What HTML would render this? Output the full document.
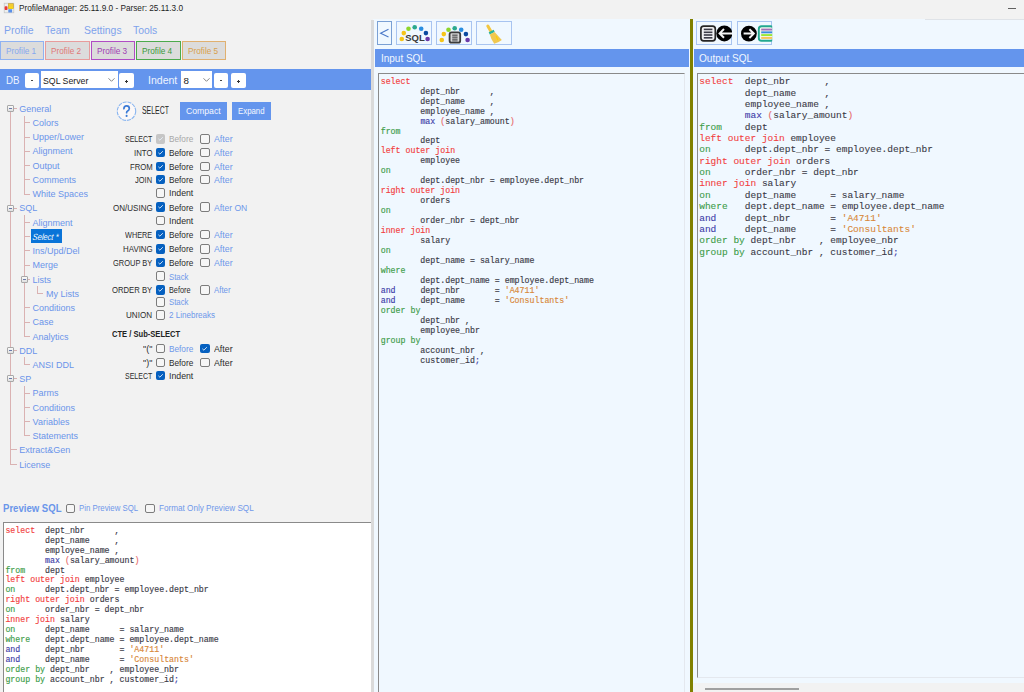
<!DOCTYPE html>
<html><head><meta charset="utf-8"><style>
html,body{margin:0;padding:0}
body{width:1024px;height:692px;overflow:hidden;position:relative;background:#f2f2f2;font-family:"Liberation Sans",sans-serif}
.a{position:absolute;box-sizing:border-box}
.t{position:absolute;white-space:pre;line-height:1;transform-origin:0 0}
</style></head><body>
<div class="a" style="left:373px;top:19px;width:651px;height:673px;background:#f0f8ff"></div>
<div class="a" style="left:693px;top:683px;width:331px;height:9px;background:#f2f2f2"></div>
<div class="a" style="left:705px;top:688px;width:94px;height:2px;background:#a0a0a0"></div>
<div class="a" style="left:371.4px;top:19.5px;width:2.2px;height:673px;background:#dadada"></div>
<div class="a" style="left:690px;top:19px;width:3px;height:673px;background:#808000"></div>
<svg class="a" style="left:3px;top:2px" width="12" height="12" viewBox="0 0 12 12">
<rect x="1.2" y="1.2" width="9.6" height="9.6" fill="#eceeee" stroke="#c4c4c4" stroke-width="0.7"/>
<rect x="5.3" y="1.7" width="5" height="4.9" fill="#f4cc30" stroke="#c09a30" stroke-width="0.6"/>
<rect x="5.6" y="5.2" width="4.5" height="1.3" fill="#ffe000"/>
<rect x="1.6" y="4.3" width="2.9" height="3.8" rx="0.8" fill="#e83838"/>
<rect x="5.3" y="7.3" width="3.8" height="3.3" rx="0.5" fill="#5a90e8"/>
</svg>
<div class="t" style="left:18.75px;top:3.94px;font-size:8.7px;color:#1e1e1e;font-weight:normal;font-style:normal;font-family:'Liberation Sans',sans-serif;;transform:scaleX(0.9477) ">ProfileManager: 25.11.9.0 - Parser: 25.11.3.0</div>
<div class="a" style="left:1008px;top:8px;width:8px;height:1px;background:#606060"></div>
<div class="a" style="left:925px;top:18.5px;width:99px;height:1px;background:#dfe3e8"></div>
<div class="t" style="left:3.90px;top:25.02px;font-size:11.2px;color:#7ea2ec;font-weight:normal;font-style:normal;font-family:'Liberation Sans',sans-serif;;transform:scaleX(0.9364) ">Profile</div>
<div class="t" style="left:45.30px;top:25.02px;font-size:11.2px;color:#7ea2ec;font-weight:normal;font-style:normal;font-family:'Liberation Sans',sans-serif;;transform:scaleX(0.9028) ">Team</div>
<div class="t" style="left:84.00px;top:25.02px;font-size:11.2px;color:#7ea2ec;font-weight:normal;font-style:normal;font-family:'Liberation Sans',sans-serif;;transform:scaleX(0.9298) ">Settings</div>
<div class="t" style="left:132.80px;top:25.02px;font-size:11.2px;color:#7ea2ec;font-weight:normal;font-style:normal;font-family:'Liberation Sans',sans-serif;;transform:scaleX(0.9263) ">Tools</div>
<div class="a" style="left:0px;top:41px;width:44px;height:19px;background:#dcdcdc;border:1px solid #8fb2f2;box-sizing:border-box"></div>
<div class="t" style="left:5.80px;top:46.72px;font-size:8.6px;color:#86a8ee;font-weight:normal;font-style:normal;font-family:'Liberation Sans',sans-serif;;transform:scaleX(0.9578) ">Profile 1</div>
<div class="a" style="left:45px;top:41px;width:44.7px;height:19px;background:#dcdcdc;border:1px solid #e89c9c;box-sizing:border-box"></div>
<div class="t" style="left:50.80px;top:46.72px;font-size:8.6px;color:#e07878;font-weight:normal;font-style:normal;font-family:'Liberation Sans',sans-serif;;transform:scaleX(0.9578) ">Profile 2</div>
<div class="a" style="left:91px;top:41px;width:44px;height:19px;background:#dcdcdc;border:1px solid #b04cc4;box-sizing:border-box"></div>
<div class="t" style="left:97.20px;top:46.72px;font-size:8.6px;color:#a03cb4;font-weight:normal;font-style:normal;font-family:'Liberation Sans',sans-serif;;transform:scaleX(0.9578) ">Profile 3</div>
<div class="a" style="left:136.2px;top:41px;width:44.80000000000001px;height:19px;background:#dcdcdc;border:1px solid #4caa4c;box-sizing:border-box"></div>
<div class="t" style="left:142.00px;top:46.72px;font-size:8.6px;color:#3a9a3a;font-weight:normal;font-style:normal;font-family:'Liberation Sans',sans-serif;;transform:scaleX(0.9578) ">Profile 4</div>
<div class="a" style="left:182px;top:41px;width:44.30000000000001px;height:19px;background:#dcdcdc;border:1px solid #e0b070;box-sizing:border-box"></div>
<div class="t" style="left:187.80px;top:46.72px;font-size:8.6px;color:#d8a04c;font-weight:normal;font-style:normal;font-family:'Liberation Sans',sans-serif;;transform:scaleX(0.9578) ">Profile 5</div>
<div class="a" style="left:0px;top:68.5px;width:371px;height:21.5px;background:#6495ed"></div>
<div class="t" style="left:6.00px;top:75.19px;font-size:11px;color:#eef4ff;font-weight:normal;font-style:normal;font-family:'Liberation Sans',sans-serif;;transform:scaleX(0.8834) ">DB</div>
<div class="a" style="left:24.5px;top:72.5px;width:14.5px;height:15.5px;background:#fff;border-radius:2px"></div>
<div class="a" style="left:30.75px;top:80.2px;width:2px;height:1px;background:#444"></div>
<div class="a" style="left:41px;top:71px;width:76.5px;height:17.2px;background:#fff"></div>
<div class="t" style="left:43.20px;top:75.50px;font-size:9.8px;color:#222;font-weight:normal;font-style:normal;font-family:'Liberation Sans',sans-serif;;transform:scaleX(0.8932) ">SQL Server</div>
<svg class="a" style="left:107px;top:77px" width="9" height="6"><path d="M1.5 1.3 L4.5 4.3 L7.5 1.3" fill="none" stroke="#777" stroke-width="0.9"/></svg>
<div class="a" style="left:119.4px;top:72.5px;width:14.299999999999983px;height:15.5px;background:#fff;border-radius:2px"></div>
<div class="a" style="left:125.05px;top:80.6px;width:3px;height:1px;background:#333"></div>
<div class="a" style="left:126.05px;top:79.6px;width:1px;height:3px;background:#333"></div>
<div class="t" style="left:147.50px;top:75.19px;font-size:11px;color:#eef4ff;font-weight:normal;font-style:normal;font-family:'Liberation Sans',sans-serif;;transform:scaleX(0.9577) ">Indent</div>
<div class="a" style="left:181px;top:71px;width:31px;height:17.2px;background:#fff"></div>
<div class="t" style="left:183.50px;top:75.50px;font-size:9.8px;color:#222;font-weight:normal;font-style:normal;font-family:'Liberation Sans',sans-serif;">8</div>
<svg class="a" style="left:202px;top:77px" width="9" height="6"><path d="M1.5 1.3 L4.5 4.3 L7.5 1.3" fill="none" stroke="#777" stroke-width="0.9"/></svg>
<div class="a" style="left:214.3px;top:72.5px;width:14.099999999999994px;height:15.5px;background:#fff;border-radius:2px"></div>
<div class="a" style="left:220.35000000000002px;top:80.2px;width:2px;height:1px;background:#444"></div>
<div class="a" style="left:231px;top:72.5px;width:14.5px;height:15.5px;background:#fff;border-radius:2px"></div>
<div class="a" style="left:236.75px;top:80.6px;width:3px;height:1px;background:#333"></div>
<div class="a" style="left:237.75px;top:79.6px;width:1px;height:3px;background:#333"></div>
<div class="a" style="left:10.0px;top:108.7px;width:1px;height:356.0px;background:#dab2b2"></div>
<div class="a" style="left:23.8px;top:115.7px;width:1px;height:78.82000000000001px;background:#dab2b2"></div>
<div class="a" style="left:23.8px;top:215.24px;width:1px;height:121.48000000000002px;background:#dab2b2"></div>
<div class="a" style="left:37.2px;top:286.34000000000003px;width:1px;height:7.71999999999997px;background:#dab2b2"></div>
<div class="a" style="left:23.8px;top:357.44px;width:1px;height:7.720000000000027px;background:#dab2b2"></div>
<div class="a" style="left:23.8px;top:385.88px;width:1px;height:50.379999999999995px;background:#dab2b2"></div>
<div class="a" style="left:10.5px;top:108.2px;width:6.199999999999999px;height:1px;background:#dab2b2"></div>
<div class="a" style="left:24.3px;top:122.42px;width:5.800000000000001px;height:1px;background:#dab2b2"></div>
<div class="a" style="left:24.3px;top:136.64000000000001px;width:5.800000000000001px;height:1px;background:#dab2b2"></div>
<div class="a" style="left:24.3px;top:150.86px;width:5.800000000000001px;height:1px;background:#dab2b2"></div>
<div class="a" style="left:24.3px;top:165.08px;width:5.800000000000001px;height:1px;background:#dab2b2"></div>
<div class="a" style="left:24.3px;top:179.3px;width:5.800000000000001px;height:1px;background:#dab2b2"></div>
<div class="a" style="left:24.3px;top:193.52px;width:5.800000000000001px;height:1px;background:#dab2b2"></div>
<div class="a" style="left:10.5px;top:207.74px;width:6.199999999999999px;height:1px;background:#dab2b2"></div>
<div class="a" style="left:24.3px;top:221.96px;width:5.800000000000001px;height:1px;background:#dab2b2"></div>
<div class="a" style="left:24.3px;top:236.18px;width:5.800000000000001px;height:1px;background:#dab2b2"></div>
<div class="a" style="left:24.3px;top:250.40000000000003px;width:5.800000000000001px;height:1px;background:#dab2b2"></div>
<div class="a" style="left:24.3px;top:264.62px;width:5.800000000000001px;height:1px;background:#dab2b2"></div>
<div class="a" style="left:24.3px;top:278.84000000000003px;width:5.800000000000001px;height:1px;background:#dab2b2"></div>
<div class="a" style="left:37.7px;top:293.06px;width:5.799999999999997px;height:1px;background:#dab2b2"></div>
<div class="a" style="left:24.3px;top:307.28000000000003px;width:5.800000000000001px;height:1px;background:#dab2b2"></div>
<div class="a" style="left:24.3px;top:321.5px;width:5.800000000000001px;height:1px;background:#dab2b2"></div>
<div class="a" style="left:24.3px;top:335.72px;width:5.800000000000001px;height:1px;background:#dab2b2"></div>
<div class="a" style="left:10.5px;top:349.94px;width:6.199999999999999px;height:1px;background:#dab2b2"></div>
<div class="a" style="left:24.3px;top:364.16px;width:5.800000000000001px;height:1px;background:#dab2b2"></div>
<div class="a" style="left:10.5px;top:378.38px;width:6.199999999999999px;height:1px;background:#dab2b2"></div>
<div class="a" style="left:24.3px;top:392.6px;width:5.800000000000001px;height:1px;background:#dab2b2"></div>
<div class="a" style="left:24.3px;top:406.82px;width:5.800000000000001px;height:1px;background:#dab2b2"></div>
<div class="a" style="left:24.3px;top:421.04px;width:5.800000000000001px;height:1px;background:#dab2b2"></div>
<div class="a" style="left:24.3px;top:435.26px;width:5.800000000000001px;height:1px;background:#dab2b2"></div>
<div class="a" style="left:10.5px;top:449.48px;width:6.199999999999999px;height:1px;background:#dab2b2"></div>
<div class="a" style="left:10.5px;top:463.7px;width:6.199999999999999px;height:1px;background:#dab2b2"></div>
<div class="a" style="left:7.2px;top:105.2px;width:6.8px;height:6.8px;background:linear-gradient(#fafafa,#e0e0e0);border:1px solid #a8a8a8;border-radius:1px"></div>
<div class="a" style="left:8.9px;top:108.10000000000001px;width:3.4px;height:1px;background:#6a7aaa"></div>
<div class="t" style="left:19.20px;top:104.58px;font-size:9px;color:#6a94ea;font-weight:normal;font-style:normal;font-family:'Liberation Sans',sans-serif;">General</div>
<div class="t" style="left:32.60px;top:118.83px;font-size:9px;color:#6a94ea;font-weight:normal;font-style:normal;font-family:'Liberation Sans',sans-serif;">Colors</div>
<div class="t" style="left:32.60px;top:133.07px;font-size:9px;color:#6a94ea;font-weight:normal;font-style:normal;font-family:'Liberation Sans',sans-serif;">Upper/Lower</div>
<div class="t" style="left:32.60px;top:147.32px;font-size:9px;color:#6a94ea;font-weight:normal;font-style:normal;font-family:'Liberation Sans',sans-serif;">Alignment</div>
<div class="t" style="left:32.60px;top:161.56px;font-size:9px;color:#6a94ea;font-weight:normal;font-style:normal;font-family:'Liberation Sans',sans-serif;">Output</div>
<div class="t" style="left:32.60px;top:175.81px;font-size:9px;color:#6a94ea;font-weight:normal;font-style:normal;font-family:'Liberation Sans',sans-serif;">Comments</div>
<div class="t" style="left:32.60px;top:190.05px;font-size:9px;color:#6a94ea;font-weight:normal;font-style:normal;font-family:'Liberation Sans',sans-serif;">White Spaces</div>
<div class="a" style="left:7.2px;top:204.74px;width:6.8px;height:6.8px;background:linear-gradient(#fafafa,#e0e0e0);border:1px solid #a8a8a8;border-radius:1px"></div>
<div class="a" style="left:8.9px;top:207.64000000000001px;width:3.4px;height:1px;background:#6a7aaa"></div>
<div class="t" style="left:19.20px;top:204.30px;font-size:9px;color:#6a94ea;font-weight:normal;font-style:normal;font-family:'Liberation Sans',sans-serif;">SQL</div>
<div class="t" style="left:32.60px;top:218.54px;font-size:9px;color:#6a94ea;font-weight:normal;font-style:normal;font-family:'Liberation Sans',sans-serif;">Alignment</div>
<div class="a" style="left:31px;top:229.3px;width:31.4px;height:14.2px;background:#0a74d8"></div>
<div class="t" style="left:32.60px;top:232.56px;font-size:9px;color:#ffffff;font-weight:normal;font-style:italic;font-family:'Liberation Sans',sans-serif;;transform:scaleX(0.8360) skewX(-8deg)">Select *</div>
<div class="t" style="left:32.60px;top:247.03px;font-size:9px;color:#6a94ea;font-weight:normal;font-style:normal;font-family:'Liberation Sans',sans-serif;">Ins/Upd/Del</div>
<div class="t" style="left:32.60px;top:261.28px;font-size:9px;color:#6a94ea;font-weight:normal;font-style:normal;font-family:'Liberation Sans',sans-serif;">Merge</div>
<div class="a" style="left:21.0px;top:275.84000000000003px;width:6.8px;height:6.8px;background:linear-gradient(#fafafa,#e0e0e0);border:1px solid #a8a8a8;border-radius:1px"></div>
<div class="a" style="left:22.7px;top:278.74px;width:3.4px;height:1px;background:#6a7aaa"></div>
<div class="t" style="left:32.60px;top:275.52px;font-size:9px;color:#6a94ea;font-weight:normal;font-style:normal;font-family:'Liberation Sans',sans-serif;">Lists</div>
<div class="t" style="left:46.00px;top:289.77px;font-size:9px;color:#6a94ea;font-weight:normal;font-style:normal;font-family:'Liberation Sans',sans-serif;">My Lists</div>
<div class="t" style="left:32.60px;top:304.01px;font-size:9px;color:#6a94ea;font-weight:normal;font-style:normal;font-family:'Liberation Sans',sans-serif;">Conditions</div>
<div class="t" style="left:32.60px;top:318.26px;font-size:9px;color:#6a94ea;font-weight:normal;font-style:normal;font-family:'Liberation Sans',sans-serif;">Case</div>
<div class="t" style="left:32.60px;top:332.50px;font-size:9px;color:#6a94ea;font-weight:normal;font-style:normal;font-family:'Liberation Sans',sans-serif;">Analytics</div>
<div class="a" style="left:7.2px;top:346.94px;width:6.8px;height:6.8px;background:linear-gradient(#fafafa,#e0e0e0);border:1px solid #a8a8a8;border-radius:1px"></div>
<div class="a" style="left:8.9px;top:349.84px;width:3.4px;height:1px;background:#6a7aaa"></div>
<div class="t" style="left:19.20px;top:346.75px;font-size:9px;color:#6a94ea;font-weight:normal;font-style:normal;font-family:'Liberation Sans',sans-serif;">DDL</div>
<div class="t" style="left:32.60px;top:360.99px;font-size:9px;color:#6a94ea;font-weight:normal;font-style:normal;font-family:'Liberation Sans',sans-serif;">ANSI DDL</div>
<div class="a" style="left:7.2px;top:375.38px;width:6.8px;height:6.8px;background:linear-gradient(#fafafa,#e0e0e0);border:1px solid #a8a8a8;border-radius:1px"></div>
<div class="a" style="left:8.9px;top:378.28px;width:3.4px;height:1px;background:#6a7aaa"></div>
<div class="t" style="left:19.20px;top:375.24px;font-size:9px;color:#6a94ea;font-weight:normal;font-style:normal;font-family:'Liberation Sans',sans-serif;">SP</div>
<div class="t" style="left:32.60px;top:389.48px;font-size:9px;color:#6a94ea;font-weight:normal;font-style:normal;font-family:'Liberation Sans',sans-serif;">Parms</div>
<div class="t" style="left:32.60px;top:403.73px;font-size:9px;color:#6a94ea;font-weight:normal;font-style:normal;font-family:'Liberation Sans',sans-serif;">Conditions</div>
<div class="t" style="left:32.60px;top:417.97px;font-size:9px;color:#6a94ea;font-weight:normal;font-style:normal;font-family:'Liberation Sans',sans-serif;">Variables</div>
<div class="t" style="left:32.60px;top:432.22px;font-size:9px;color:#6a94ea;font-weight:normal;font-style:normal;font-family:'Liberation Sans',sans-serif;">Statements</div>
<div class="t" style="left:19.20px;top:446.46px;font-size:9px;color:#6a94ea;font-weight:normal;font-style:normal;font-family:'Liberation Sans',sans-serif;">Extract&amp;Gen</div>
<div class="t" style="left:19.20px;top:460.71px;font-size:9px;color:#6a94ea;font-weight:normal;font-style:normal;font-family:'Liberation Sans',sans-serif;">License</div>
<svg class="a" style="left:116px;top:101px" width="21" height="21" viewBox="0 0 21 21">
<circle cx="10.5" cy="10.2" r="9.2" fill="#fbf8f8" stroke="#8ab6f0" stroke-width="1.1" stroke-dasharray="4 0.9"/>
<path d="M7.9 7.7 Q8.0 4.9 10.6 4.9 Q13.3 4.9 13.3 7.4 Q13.3 9.0 11.7 9.9 Q10.6 10.6 10.6 11.7" fill="none" stroke="#3a7ad6" stroke-width="1.7" stroke-linecap="round"/>
<circle cx="10.6" cy="14.9" r="1.05" fill="#3a7ad6"/>
</svg>
<div class="t" style="left:141.60px;top:105.83px;font-size:10px;color:#262626;font-weight:normal;font-style:normal;font-family:'Liberation Sans',sans-serif;;transform:scaleX(0.6914) ">SELECT</div>
<div class="a" style="left:179.9px;top:102.1px;width:47px;height:17.6px;background:#6495ed"></div>
<div class="t" style="left:185.90px;top:106.74px;font-size:8.7px;color:#f4f8ff;font-weight:normal;font-style:normal;font-family:'Liberation Sans',sans-serif;">Compact</div>
<div class="a" style="left:231.8px;top:102.1px;width:39.2px;height:17.6px;background:#6495ed"></div>
<div class="t" style="left:237.90px;top:106.74px;font-size:8.7px;color:#f4f8ff;font-weight:normal;font-style:normal;font-family:'Liberation Sans',sans-serif;;transform:scaleX(0.9027) ">Expand</div>
<div class="t" style="left:125.10px;top:134.47px;font-size:9.6px;color:#2c2c2c;font-weight:normal;font-style:normal;font-family:'Liberation Sans',sans-serif;;transform:scaleX(0.7287) ">SELECT</div>
<div class="a" style="left:156px;top:134.30px;width:9.4px;height:9.4px;background:#c6c6c6;border-radius:2px"><svg width="9" height="9" viewBox="0 0 9 9" style="position:absolute;left:0;top:0"><path d="M2.4 4.8 L3.9 6.2 L6.8 3.2" fill="none" stroke="#e8f0fa" stroke-width="0.9"/></svg></div>
<div class="t" style="left:169.40px;top:134.47px;font-size:9.6px;color:#a8a8a8;font-weight:normal;font-style:normal;font-family:'Liberation Sans',sans-serif;;transform:scaleX(0.8592) ">Before</div>
<div class="a" style="left:200.4px;top:134.3px;width:9.4px;height:9.4px;background:#f6f6f6;border:1px solid #7c7c7c;border-radius:2px"></div>
<div class="t" style="left:214.00px;top:134.47px;font-size:9.6px;color:#6e98ea;font-weight:normal;font-style:normal;font-family:'Liberation Sans',sans-serif;;transform:scaleX(0.9178) ">After</div>
<div class="t" style="left:133.80px;top:147.97px;font-size:9.6px;color:#2c2c2c;font-weight:normal;font-style:normal;font-family:'Liberation Sans',sans-serif;;transform:scaleX(0.8132) ">INTO</div>
<div class="a" style="left:156px;top:147.80px;width:9.4px;height:9.4px;background:#0560c0;border-radius:2px"><svg width="9" height="9" viewBox="0 0 9 9" style="position:absolute;left:0;top:0"><path d="M2.4 4.8 L3.9 6.2 L6.8 3.2" fill="none" stroke="#e8f0fa" stroke-width="0.9"/></svg></div>
<div class="t" style="left:169.40px;top:147.97px;font-size:9.6px;color:#2c2c2c;font-weight:normal;font-style:normal;font-family:'Liberation Sans',sans-serif;;transform:scaleX(0.8592) ">Before</div>
<div class="a" style="left:200.4px;top:147.8px;width:9.4px;height:9.4px;background:#f6f6f6;border:1px solid #7c7c7c;border-radius:2px"></div>
<div class="t" style="left:214.00px;top:147.97px;font-size:9.6px;color:#6e98ea;font-weight:normal;font-style:normal;font-family:'Liberation Sans',sans-serif;;transform:scaleX(0.9178) ">After</div>
<div class="t" style="left:129.50px;top:161.67px;font-size:9.6px;color:#2c2c2c;font-weight:normal;font-style:normal;font-family:'Liberation Sans',sans-serif;;transform:scaleX(0.8071) ">FROM</div>
<div class="a" style="left:156px;top:161.50px;width:9.4px;height:9.4px;background:#0560c0;border-radius:2px"><svg width="9" height="9" viewBox="0 0 9 9" style="position:absolute;left:0;top:0"><path d="M2.4 4.8 L3.9 6.2 L6.8 3.2" fill="none" stroke="#e8f0fa" stroke-width="0.9"/></svg></div>
<div class="t" style="left:169.40px;top:161.67px;font-size:9.6px;color:#2c2c2c;font-weight:normal;font-style:normal;font-family:'Liberation Sans',sans-serif;;transform:scaleX(0.8592) ">Before</div>
<div class="a" style="left:200.4px;top:161.5px;width:9.4px;height:9.4px;background:#f6f6f6;border:1px solid #7c7c7c;border-radius:2px"></div>
<div class="t" style="left:214.00px;top:161.67px;font-size:9.6px;color:#6e98ea;font-weight:normal;font-style:normal;font-family:'Liberation Sans',sans-serif;;transform:scaleX(0.9178) ">After</div>
<div class="t" style="left:135.20px;top:175.17px;font-size:9.6px;color:#2c2c2c;font-weight:normal;font-style:normal;font-family:'Liberation Sans',sans-serif;;transform:scaleX(0.7823) ">JOIN</div>
<div class="a" style="left:156px;top:175.00px;width:9.4px;height:9.4px;background:#0560c0;border-radius:2px"><svg width="9" height="9" viewBox="0 0 9 9" style="position:absolute;left:0;top:0"><path d="M2.4 4.8 L3.9 6.2 L6.8 3.2" fill="none" stroke="#e8f0fa" stroke-width="0.9"/></svg></div>
<div class="t" style="left:169.40px;top:175.17px;font-size:9.6px;color:#2c2c2c;font-weight:normal;font-style:normal;font-family:'Liberation Sans',sans-serif;;transform:scaleX(0.8592) ">Before</div>
<div class="a" style="left:200.4px;top:175.0px;width:9.4px;height:9.4px;background:#f6f6f6;border:1px solid #7c7c7c;border-radius:2px"></div>
<div class="t" style="left:214.00px;top:175.17px;font-size:9.6px;color:#6e98ea;font-weight:normal;font-style:normal;font-family:'Liberation Sans',sans-serif;;transform:scaleX(0.9178) ">After</div>
<div class="a" style="left:156px;top:188.3px;width:9.4px;height:9.4px;background:#f6f6f6;border:1px solid #7c7c7c;border-radius:2px"></div>
<div class="t" style="left:169.40px;top:188.47px;font-size:9.6px;color:#2c2c2c;font-weight:normal;font-style:normal;font-family:'Liberation Sans',sans-serif;;transform:scaleX(0.9105) ">Indent</div>
<div class="t" style="left:112.50px;top:202.57px;font-size:9.6px;color:#2c2c2c;font-weight:normal;font-style:normal;font-family:'Liberation Sans',sans-serif;;transform:scaleX(0.8387) ">ON/USING</div>
<div class="a" style="left:156px;top:202.40px;width:9.4px;height:9.4px;background:#0560c0;border-radius:2px"><svg width="9" height="9" viewBox="0 0 9 9" style="position:absolute;left:0;top:0"><path d="M2.4 4.8 L3.9 6.2 L6.8 3.2" fill="none" stroke="#e8f0fa" stroke-width="0.9"/></svg></div>
<div class="t" style="left:169.40px;top:202.57px;font-size:9.6px;color:#2c2c2c;font-weight:normal;font-style:normal;font-family:'Liberation Sans',sans-serif;;transform:scaleX(0.8592) ">Before</div>
<div class="a" style="left:200.4px;top:202.4px;width:9.4px;height:9.4px;background:#f6f6f6;border:1px solid #7c7c7c;border-radius:2px"></div>
<div class="t" style="left:214.00px;top:202.57px;font-size:9.6px;color:#6e98ea;font-weight:normal;font-style:normal;font-family:'Liberation Sans',sans-serif;;transform:scaleX(0.8921) ">After ON</div>
<div class="a" style="left:156px;top:216.1px;width:9.4px;height:9.4px;background:#f6f6f6;border:1px solid #7c7c7c;border-radius:2px"></div>
<div class="t" style="left:169.40px;top:216.27px;font-size:9.6px;color:#2c2c2c;font-weight:normal;font-style:normal;font-family:'Liberation Sans',sans-serif;;transform:scaleX(0.9105) ">Indent</div>
<div class="t" style="left:125.10px;top:230.27px;font-size:9.6px;color:#2c2c2c;font-weight:normal;font-style:normal;font-family:'Liberation Sans',sans-serif;;transform:scaleX(0.7615) ">WHERE</div>
<div class="a" style="left:156px;top:230.10px;width:9.4px;height:9.4px;background:#0560c0;border-radius:2px"><svg width="9" height="9" viewBox="0 0 9 9" style="position:absolute;left:0;top:0"><path d="M2.4 4.8 L3.9 6.2 L6.8 3.2" fill="none" stroke="#e8f0fa" stroke-width="0.9"/></svg></div>
<div class="t" style="left:169.40px;top:230.27px;font-size:9.6px;color:#2c2c2c;font-weight:normal;font-style:normal;font-family:'Liberation Sans',sans-serif;;transform:scaleX(0.8592) ">Before</div>
<div class="a" style="left:200.4px;top:230.1px;width:9.4px;height:9.4px;background:#f6f6f6;border:1px solid #7c7c7c;border-radius:2px"></div>
<div class="t" style="left:214.00px;top:230.27px;font-size:9.6px;color:#6e98ea;font-weight:normal;font-style:normal;font-family:'Liberation Sans',sans-serif;;transform:scaleX(0.9178) ">After</div>
<div class="t" style="left:122.60px;top:244.37px;font-size:9.6px;color:#2c2c2c;font-weight:normal;font-style:normal;font-family:'Liberation Sans',sans-serif;;transform:scaleX(0.8232) ">HAVING</div>
<div class="a" style="left:156px;top:244.20px;width:9.4px;height:9.4px;background:#0560c0;border-radius:2px"><svg width="9" height="9" viewBox="0 0 9 9" style="position:absolute;left:0;top:0"><path d="M2.4 4.8 L3.9 6.2 L6.8 3.2" fill="none" stroke="#e8f0fa" stroke-width="0.9"/></svg></div>
<div class="t" style="left:169.40px;top:244.37px;font-size:9.6px;color:#2c2c2c;font-weight:normal;font-style:normal;font-family:'Liberation Sans',sans-serif;;transform:scaleX(0.8592) ">Before</div>
<div class="a" style="left:200.4px;top:244.20000000000002px;width:9.4px;height:9.4px;background:#f6f6f6;border:1px solid #7c7c7c;border-radius:2px"></div>
<div class="t" style="left:214.00px;top:244.37px;font-size:9.6px;color:#6e98ea;font-weight:normal;font-style:normal;font-family:'Liberation Sans',sans-serif;;transform:scaleX(0.9178) ">After</div>
<div class="t" style="left:113.00px;top:258.17px;font-size:9.6px;color:#2c2c2c;font-weight:normal;font-style:normal;font-family:'Liberation Sans',sans-serif;;transform:scaleX(0.7785) ">GROUP BY</div>
<div class="a" style="left:156px;top:258.00px;width:9.4px;height:9.4px;background:#0560c0;border-radius:2px"><svg width="9" height="9" viewBox="0 0 9 9" style="position:absolute;left:0;top:0"><path d="M2.4 4.8 L3.9 6.2 L6.8 3.2" fill="none" stroke="#e8f0fa" stroke-width="0.9"/></svg></div>
<div class="t" style="left:169.40px;top:258.17px;font-size:9.6px;color:#2c2c2c;font-weight:normal;font-style:normal;font-family:'Liberation Sans',sans-serif;;transform:scaleX(0.8592) ">Before</div>
<div class="a" style="left:200.4px;top:258.0px;width:9.4px;height:9.4px;background:#f6f6f6;border:1px solid #7c7c7c;border-radius:2px"></div>
<div class="t" style="left:214.00px;top:258.17px;font-size:9.6px;color:#6e98ea;font-weight:normal;font-style:normal;font-family:'Liberation Sans',sans-serif;;transform:scaleX(0.9178) ">After</div>
<div class="a" style="left:156px;top:271.4px;width:9.4px;height:9.4px;background:#f6f6f6;border:1px solid #7c7c7c;border-radius:2px"></div>
<div class="t" style="left:169.40px;top:271.57px;font-size:9.6px;color:#6e98ea;font-weight:normal;font-style:normal;font-family:'Liberation Sans',sans-serif;;transform:scaleX(0.8125) ">Stack</div>
<div class="t" style="left:112.10px;top:285.37px;font-size:9.6px;color:#2c2c2c;font-weight:normal;font-style:normal;font-family:'Liberation Sans',sans-serif;;transform:scaleX(0.8020) ">ORDER BY</div>
<div class="a" style="left:156px;top:285.20px;width:9.4px;height:9.4px;background:#0560c0;border-radius:2px"><svg width="9" height="9" viewBox="0 0 9 9" style="position:absolute;left:0;top:0"><path d="M2.4 4.8 L3.9 6.2 L6.8 3.2" fill="none" stroke="#e8f0fa" stroke-width="0.9"/></svg></div>
<div class="t" style="left:169.40px;top:285.37px;font-size:9.6px;color:#2c2c2c;font-weight:normal;font-style:normal;font-family:'Liberation Sans',sans-serif;;transform:scaleX(0.7602) ">Before</div>
<div class="a" style="left:200.4px;top:285.2px;width:9.4px;height:9.4px;background:#f6f6f6;border:1px solid #7c7c7c;border-radius:2px"></div>
<div class="t" style="left:214.00px;top:285.37px;font-size:9.6px;color:#6e98ea;font-weight:normal;font-style:normal;font-family:'Liberation Sans',sans-serif;;transform:scaleX(0.8142) ">After</div>
<div class="a" style="left:156px;top:297.2px;width:9.4px;height:9.4px;background:#f6f6f6;border:1px solid #7c7c7c;border-radius:2px"></div>
<div class="t" style="left:169.40px;top:297.37px;font-size:9.6px;color:#6e98ea;font-weight:normal;font-style:normal;font-family:'Liberation Sans',sans-serif;;transform:scaleX(0.8125) ">Stack</div>
<div class="t" style="left:126.20px;top:310.37px;font-size:9.6px;color:#2c2c2c;font-weight:normal;font-style:normal;font-family:'Liberation Sans',sans-serif;;transform:scaleX(0.8441) ">UNION</div>
<div class="a" style="left:156px;top:310.2px;width:9.4px;height:9.4px;background:#f6f6f6;border:1px solid #7c7c7c;border-radius:2px"></div>
<div class="t" style="left:169.40px;top:310.37px;font-size:9.6px;color:#6e98ea;font-weight:normal;font-style:normal;font-family:'Liberation Sans',sans-serif;;transform:scaleX(0.8391) ">2 Linebreaks</div>
<div class="t" style="left:142.90px;top:344.07px;font-size:9.6px;color:#2c2c2c;font-weight:normal;font-style:normal;font-family:'Liberation Sans',sans-serif;;transform:scaleX(0.9385) ">&quot;(&quot;</div>
<div class="a" style="left:156px;top:343.9px;width:9.4px;height:9.4px;background:#f6f6f6;border:1px solid #7c7c7c;border-radius:2px"></div>
<div class="t" style="left:169.40px;top:344.07px;font-size:9.6px;color:#6e98ea;font-weight:normal;font-style:normal;font-family:'Liberation Sans',sans-serif;;transform:scaleX(0.8592) ">Before</div>
<div class="a" style="left:200.4px;top:343.90px;width:9.4px;height:9.4px;background:#0560c0;border-radius:2px"><svg width="9" height="9" viewBox="0 0 9 9" style="position:absolute;left:0;top:0"><path d="M2.4 4.8 L3.9 6.2 L6.8 3.2" fill="none" stroke="#e8f0fa" stroke-width="0.9"/></svg></div>
<div class="t" style="left:214.00px;top:344.07px;font-size:9.6px;color:#2c2c2c;font-weight:normal;font-style:normal;font-family:'Liberation Sans',sans-serif;;transform:scaleX(0.9178) ">After</div>
<div class="t" style="left:142.90px;top:357.67px;font-size:9.6px;color:#2c2c2c;font-weight:normal;font-style:normal;font-family:'Liberation Sans',sans-serif;;transform:scaleX(0.9385) ">&quot;)&quot;</div>
<div class="a" style="left:156px;top:357.5px;width:9.4px;height:9.4px;background:#f6f6f6;border:1px solid #7c7c7c;border-radius:2px"></div>
<div class="t" style="left:169.40px;top:357.67px;font-size:9.6px;color:#2c2c2c;font-weight:normal;font-style:normal;font-family:'Liberation Sans',sans-serif;;transform:scaleX(0.8592) ">Before</div>
<div class="a" style="left:200.4px;top:357.5px;width:9.4px;height:9.4px;background:#f6f6f6;border:1px solid #7c7c7c;border-radius:2px"></div>
<div class="t" style="left:214.00px;top:357.67px;font-size:9.6px;color:#2c2c2c;font-weight:normal;font-style:normal;font-family:'Liberation Sans',sans-serif;;transform:scaleX(0.9178) ">After</div>
<div class="t" style="left:125.10px;top:371.27px;font-size:9.6px;color:#2c2c2c;font-weight:normal;font-style:normal;font-family:'Liberation Sans',sans-serif;;transform:scaleX(0.7287) ">SELECT</div>
<div class="a" style="left:156px;top:371.10px;width:9.4px;height:9.4px;background:#0560c0;border-radius:2px"><svg width="9" height="9" viewBox="0 0 9 9" style="position:absolute;left:0;top:0"><path d="M2.4 4.8 L3.9 6.2 L6.8 3.2" fill="none" stroke="#e8f0fa" stroke-width="0.9"/></svg></div>
<div class="t" style="left:169.40px;top:371.27px;font-size:9.6px;color:#2c2c2c;font-weight:normal;font-style:normal;font-family:'Liberation Sans',sans-serif;;transform:scaleX(0.9105) ">Indent</div>
<div class="t" style="left:112.00px;top:328.87px;font-size:9.6px;color:#222;font-weight:bold;font-style:normal;font-family:'Liberation Sans',sans-serif;;transform:scaleX(0.7899) ">CTE / Sub-SELECT</div>
<div class="a" style="left:375px;top:48.7px;width:314px;height:18px;background:#6495ed"></div>
<div class="t" style="left:380.60px;top:53.21px;font-size:10.5px;color:#f2f8ff;font-weight:normal;font-style:normal;font-family:'Liberation Sans',sans-serif;;transform:scaleX(0.9496) ">Input SQL</div>
<div class="a" style="left:378px;top:73px;width:307px;height:619px;background:#f0f8ff;border-top:1px solid #8a8a8a;border-left:1px solid #8a8a8a;border-right:1px solid #e4e8ee"></div>
<div class="t" style="left:380.70px;top:77.70px;font-family:'Liberation Mono',monospace;font-size:8.27px;font-weight:normal;-webkit-text-stroke:0.15px;"><span style="color:#f24040">select</span></div>
<div class="t" style="left:380.70px;top:87.66px;font-family:'Liberation Mono',monospace;font-size:8.27px;font-weight:normal;-webkit-text-stroke:0.15px;"><span style="color:#3a3a46">        dept_nbr      ,</span></div>
<div class="t" style="left:380.70px;top:97.62px;font-family:'Liberation Mono',monospace;font-size:8.27px;font-weight:normal;-webkit-text-stroke:0.15px;"><span style="color:#3a3a46">        dept_name     ,</span></div>
<div class="t" style="left:380.70px;top:107.58px;font-family:'Liberation Mono',monospace;font-size:8.27px;font-weight:normal;-webkit-text-stroke:0.15px;"><span style="color:#3a3a46">        employee_name ,</span></div>
<div class="t" style="left:380.70px;top:117.54px;font-family:'Liberation Mono',monospace;font-size:8.27px;font-weight:normal;-webkit-text-stroke:0.15px;"><span style="color:#3a3a46">        </span><span style="color:#3c3ca8">max</span><span style="color:#3a3a46"> </span><span style="color:#e86a6a">(</span><span style="color:#3a3a46">salary_amount</span><span style="color:#e86a6a">)</span></div>
<div class="t" style="left:380.70px;top:127.50px;font-family:'Liberation Mono',monospace;font-size:8.27px;font-weight:normal;-webkit-text-stroke:0.15px;"><span style="color:#3c9c48">from</span></div>
<div class="t" style="left:380.70px;top:137.46px;font-family:'Liberation Mono',monospace;font-size:8.27px;font-weight:normal;-webkit-text-stroke:0.15px;"><span style="color:#3a3a46">        dept</span></div>
<div class="t" style="left:380.70px;top:147.42px;font-family:'Liberation Mono',monospace;font-size:8.27px;font-weight:normal;-webkit-text-stroke:0.15px;"><span style="color:#f24040">left outer join</span></div>
<div class="t" style="left:380.70px;top:157.38px;font-family:'Liberation Mono',monospace;font-size:8.27px;font-weight:normal;-webkit-text-stroke:0.15px;"><span style="color:#3a3a46">        employee</span></div>
<div class="t" style="left:380.70px;top:167.34px;font-family:'Liberation Mono',monospace;font-size:8.27px;font-weight:normal;-webkit-text-stroke:0.15px;"><span style="color:#3c9c48">on</span></div>
<div class="t" style="left:380.70px;top:177.30px;font-family:'Liberation Mono',monospace;font-size:8.27px;font-weight:normal;-webkit-text-stroke:0.15px;"><span style="color:#3a3a46">        dept.dept_nbr = employee.dept_nbr</span></div>
<div class="t" style="left:380.70px;top:187.26px;font-family:'Liberation Mono',monospace;font-size:8.27px;font-weight:normal;-webkit-text-stroke:0.15px;"><span style="color:#f24040">right outer join</span></div>
<div class="t" style="left:380.70px;top:197.22px;font-family:'Liberation Mono',monospace;font-size:8.27px;font-weight:normal;-webkit-text-stroke:0.15px;"><span style="color:#3a3a46">        orders</span></div>
<div class="t" style="left:380.70px;top:207.18px;font-family:'Liberation Mono',monospace;font-size:8.27px;font-weight:normal;-webkit-text-stroke:0.15px;"><span style="color:#3c9c48">on</span></div>
<div class="t" style="left:380.70px;top:217.14px;font-family:'Liberation Mono',monospace;font-size:8.27px;font-weight:normal;-webkit-text-stroke:0.15px;"><span style="color:#3a3a46">        order_nbr = dept_nbr</span></div>
<div class="t" style="left:380.70px;top:227.10px;font-family:'Liberation Mono',monospace;font-size:8.27px;font-weight:normal;-webkit-text-stroke:0.15px;"><span style="color:#f24040">inner join</span></div>
<div class="t" style="left:380.70px;top:237.06px;font-family:'Liberation Mono',monospace;font-size:8.27px;font-weight:normal;-webkit-text-stroke:0.15px;"><span style="color:#3a3a46">        salary</span></div>
<div class="t" style="left:380.70px;top:247.02px;font-family:'Liberation Mono',monospace;font-size:8.27px;font-weight:normal;-webkit-text-stroke:0.15px;"><span style="color:#3c9c48">on</span></div>
<div class="t" style="left:380.70px;top:256.98px;font-family:'Liberation Mono',monospace;font-size:8.27px;font-weight:normal;-webkit-text-stroke:0.15px;"><span style="color:#3a3a46">        dept_name = salary_name</span></div>
<div class="t" style="left:380.70px;top:266.94px;font-family:'Liberation Mono',monospace;font-size:8.27px;font-weight:normal;-webkit-text-stroke:0.15px;"><span style="color:#3c9c48">where</span></div>
<div class="t" style="left:380.70px;top:276.90px;font-family:'Liberation Mono',monospace;font-size:8.27px;font-weight:normal;-webkit-text-stroke:0.15px;"><span style="color:#3a3a46">        dept.dept_name = employee.dept_name</span></div>
<div class="t" style="left:380.70px;top:286.86px;font-family:'Liberation Mono',monospace;font-size:8.27px;font-weight:normal;-webkit-text-stroke:0.15px;"><span style="color:#3c3ca8">and</span><span style="color:#3a3a46">     dept_nbr       = </span><span style="color:#d8883a">&#x27;A4711&#x27;</span></div>
<div class="t" style="left:380.70px;top:296.82px;font-family:'Liberation Mono',monospace;font-size:8.27px;font-weight:normal;-webkit-text-stroke:0.15px;"><span style="color:#3c3ca8">and</span><span style="color:#3a3a46">     dept_name      = </span><span style="color:#d8883a">&#x27;Consultants&#x27;</span></div>
<div class="t" style="left:380.70px;top:306.78px;font-family:'Liberation Mono',monospace;font-size:8.27px;font-weight:normal;-webkit-text-stroke:0.15px;"><span style="color:#3c9c48">order by</span></div>
<div class="t" style="left:380.70px;top:316.74px;font-family:'Liberation Mono',monospace;font-size:8.27px;font-weight:normal;-webkit-text-stroke:0.15px;"><span style="color:#3a3a46">        dept_nbr ,</span></div>
<div class="t" style="left:380.70px;top:326.70px;font-family:'Liberation Mono',monospace;font-size:8.27px;font-weight:normal;-webkit-text-stroke:0.15px;"><span style="color:#3a3a46">        employee_nbr</span></div>
<div class="t" style="left:380.70px;top:336.66px;font-family:'Liberation Mono',monospace;font-size:8.27px;font-weight:normal;-webkit-text-stroke:0.15px;"><span style="color:#3c9c48">group by</span></div>
<div class="t" style="left:380.70px;top:346.62px;font-family:'Liberation Mono',monospace;font-size:8.27px;font-weight:normal;-webkit-text-stroke:0.15px;"><span style="color:#3a3a46">        account_nbr ,</span></div>
<div class="t" style="left:380.70px;top:356.58px;font-family:'Liberation Mono',monospace;font-size:8.27px;font-weight:normal;-webkit-text-stroke:0.15px;"><span style="color:#3a3a46">        customer_id</span><span style="color:#3c3ca8">;</span></div>
<div class="a" style="left:694px;top:48.7px;width:330px;height:18px;background:#6495ed"></div>
<div class="t" style="left:699.30px;top:53.21px;font-size:10.5px;color:#f2f8ff;font-weight:normal;font-style:normal;font-family:'Liberation Sans',sans-serif;;transform:scaleX(0.9594) ">Output SQL</div>
<div class="a" style="left:697px;top:73px;width:327px;height:604.5px;background:#f0f8ff;border-top:1px solid #8a8a8a;border-left:1px solid #8a8a8a;border-bottom:1px solid #e4e8ee"></div>
<div class="t" style="left:699.20px;top:77.16px;font-family:'Liberation Mono',monospace;font-size:9.5px;font-weight:normal;-webkit-text-stroke:0.1px;"><span style="color:#f24040">select</span><span style="color:#3a3a46">  dept_nbr      ,</span></div>
<div class="t" style="left:699.20px;top:88.53px;font-family:'Liberation Mono',monospace;font-size:9.5px;font-weight:normal;-webkit-text-stroke:0.1px;"><span style="color:#3a3a46">        dept_name     ,</span></div>
<div class="t" style="left:699.20px;top:99.90px;font-family:'Liberation Mono',monospace;font-size:9.5px;font-weight:normal;-webkit-text-stroke:0.1px;"><span style="color:#3a3a46">        employee_name ,</span></div>
<div class="t" style="left:699.20px;top:111.27px;font-family:'Liberation Mono',monospace;font-size:9.5px;font-weight:normal;-webkit-text-stroke:0.1px;"><span style="color:#3a3a46">        </span><span style="color:#3c3ca8">max</span><span style="color:#3a3a46"> </span><span style="color:#e86a6a">(</span><span style="color:#3a3a46">salary_amount</span><span style="color:#e86a6a">)</span></div>
<div class="t" style="left:699.20px;top:122.64px;font-family:'Liberation Mono',monospace;font-size:9.5px;font-weight:normal;-webkit-text-stroke:0.1px;"><span style="color:#3c9c48">from</span><span style="color:#3a3a46">    dept</span></div>
<div class="t" style="left:699.20px;top:134.01px;font-family:'Liberation Mono',monospace;font-size:9.5px;font-weight:normal;-webkit-text-stroke:0.1px;"><span style="color:#f24040">left outer join</span><span style="color:#3a3a46"> employee</span></div>
<div class="t" style="left:699.20px;top:145.38px;font-family:'Liberation Mono',monospace;font-size:9.5px;font-weight:normal;-webkit-text-stroke:0.1px;"><span style="color:#3c9c48">on</span><span style="color:#3a3a46">      dept.dept_nbr = employee.dept_nbr</span></div>
<div class="t" style="left:699.20px;top:156.75px;font-family:'Liberation Mono',monospace;font-size:9.5px;font-weight:normal;-webkit-text-stroke:0.1px;"><span style="color:#f24040">right outer join</span><span style="color:#3a3a46"> orders</span></div>
<div class="t" style="left:699.20px;top:168.12px;font-family:'Liberation Mono',monospace;font-size:9.5px;font-weight:normal;-webkit-text-stroke:0.1px;"><span style="color:#3c9c48">on</span><span style="color:#3a3a46">      order_nbr = dept_nbr</span></div>
<div class="t" style="left:699.20px;top:179.49px;font-family:'Liberation Mono',monospace;font-size:9.5px;font-weight:normal;-webkit-text-stroke:0.1px;"><span style="color:#f24040">inner join</span><span style="color:#3a3a46"> salary</span></div>
<div class="t" style="left:699.20px;top:190.86px;font-family:'Liberation Mono',monospace;font-size:9.5px;font-weight:normal;-webkit-text-stroke:0.1px;"><span style="color:#3c9c48">on</span><span style="color:#3a3a46">      dept_name      = salary_name</span></div>
<div class="t" style="left:699.20px;top:202.23px;font-family:'Liberation Mono',monospace;font-size:9.5px;font-weight:normal;-webkit-text-stroke:0.1px;"><span style="color:#3c9c48">where</span><span style="color:#3a3a46">   dept.dept_name = employee.dept_name</span></div>
<div class="t" style="left:699.20px;top:213.60px;font-family:'Liberation Mono',monospace;font-size:9.5px;font-weight:normal;-webkit-text-stroke:0.1px;"><span style="color:#3c3ca8">and</span><span style="color:#3a3a46">     dept_nbr       = </span><span style="color:#d8883a">&#x27;A4711&#x27;</span></div>
<div class="t" style="left:699.20px;top:224.97px;font-family:'Liberation Mono',monospace;font-size:9.5px;font-weight:normal;-webkit-text-stroke:0.1px;"><span style="color:#3c3ca8">and</span><span style="color:#3a3a46">     dept_name      = </span><span style="color:#d8883a">&#x27;Consultants&#x27;</span></div>
<div class="t" style="left:699.20px;top:236.34px;font-family:'Liberation Mono',monospace;font-size:9.5px;font-weight:normal;-webkit-text-stroke:0.1px;"><span style="color:#3c9c48">order by</span><span style="color:#3a3a46"> dept_nbr    , employee_nbr</span></div>
<div class="t" style="left:699.20px;top:247.71px;font-family:'Liberation Mono',monospace;font-size:9.5px;font-weight:normal;-webkit-text-stroke:0.1px;"><span style="color:#3c9c48">group by</span><span style="color:#3a3a46"> account_nbr , customer_id</span><span style="color:#3c3ca8">;</span></div>
<div class="t" style="left:2.50px;top:503.11px;font-size:10.5px;color:#6a96ea;font-weight:bold;font-style:normal;font-family:'Liberation Sans',sans-serif;;transform:scaleX(0.9112) ">Preview SQL</div>
<div class="a" style="left:65.5px;top:503.59999999999997px;width:9.4px;height:9.4px;background:#f6f6f6;border:1px solid #7c7c7c;border-radius:2px"></div>
<div class="t" style="left:79.20px;top:503.78px;font-size:9px;color:#7098ea;font-weight:normal;font-style:normal;font-family:'Liberation Sans',sans-serif;;transform:scaleX(0.8687) ">Pin Preview SQL</div>
<div class="a" style="left:145.2px;top:503.59999999999997px;width:9.4px;height:9.4px;background:#f6f6f6;border:1px solid #7c7c7c;border-radius:2px"></div>
<div class="t" style="left:158.60px;top:503.78px;font-size:9px;color:#7098ea;font-weight:normal;font-style:normal;font-family:'Liberation Sans',sans-serif;;transform:scaleX(0.9059) ">Format Only Preview SQL</div>
<div class="a" style="left:3px;top:522px;width:367.5px;height:170px;background:#fff;border-top:1px solid #8a8a8a;border-left:1px solid #8a8a8a"></div>
<div class="t" style="left:5.40px;top:526.80px;font-family:'Liberation Mono',monospace;font-size:8.27px;font-weight:normal;-webkit-text-stroke:0.15px;"><span style="color:#f24040">select</span><span style="color:#3a3a46">  dept_nbr      ,</span></div>
<div class="t" style="left:5.40px;top:536.73px;font-family:'Liberation Mono',monospace;font-size:8.27px;font-weight:normal;-webkit-text-stroke:0.15px;"><span style="color:#3a3a46">        dept_name     ,</span></div>
<div class="t" style="left:5.40px;top:546.66px;font-family:'Liberation Mono',monospace;font-size:8.27px;font-weight:normal;-webkit-text-stroke:0.15px;"><span style="color:#3a3a46">        employee_name ,</span></div>
<div class="t" style="left:5.40px;top:556.59px;font-family:'Liberation Mono',monospace;font-size:8.27px;font-weight:normal;-webkit-text-stroke:0.15px;"><span style="color:#3a3a46">        </span><span style="color:#3c3ca8">max</span><span style="color:#3a3a46"> </span><span style="color:#e86a6a">(</span><span style="color:#3a3a46">salary_amount</span><span style="color:#e86a6a">)</span></div>
<div class="t" style="left:5.40px;top:566.52px;font-family:'Liberation Mono',monospace;font-size:8.27px;font-weight:normal;-webkit-text-stroke:0.15px;"><span style="color:#3c9c48">from</span><span style="color:#3a3a46">    dept</span></div>
<div class="t" style="left:5.40px;top:576.45px;font-family:'Liberation Mono',monospace;font-size:8.27px;font-weight:normal;-webkit-text-stroke:0.15px;"><span style="color:#f24040">left outer join</span><span style="color:#3a3a46"> employee</span></div>
<div class="t" style="left:5.40px;top:586.38px;font-family:'Liberation Mono',monospace;font-size:8.27px;font-weight:normal;-webkit-text-stroke:0.15px;"><span style="color:#3c9c48">on</span><span style="color:#3a3a46">      dept.dept_nbr = employee.dept_nbr</span></div>
<div class="t" style="left:5.40px;top:596.31px;font-family:'Liberation Mono',monospace;font-size:8.27px;font-weight:normal;-webkit-text-stroke:0.15px;"><span style="color:#f24040">right outer join</span><span style="color:#3a3a46"> orders</span></div>
<div class="t" style="left:5.40px;top:606.24px;font-family:'Liberation Mono',monospace;font-size:8.27px;font-weight:normal;-webkit-text-stroke:0.15px;"><span style="color:#3c9c48">on</span><span style="color:#3a3a46">      order_nbr = dept_nbr</span></div>
<div class="t" style="left:5.40px;top:616.17px;font-family:'Liberation Mono',monospace;font-size:8.27px;font-weight:normal;-webkit-text-stroke:0.15px;"><span style="color:#f24040">inner join</span><span style="color:#3a3a46"> salary</span></div>
<div class="t" style="left:5.40px;top:626.10px;font-family:'Liberation Mono',monospace;font-size:8.27px;font-weight:normal;-webkit-text-stroke:0.15px;"><span style="color:#3c9c48">on</span><span style="color:#3a3a46">      dept_name      = salary_name</span></div>
<div class="t" style="left:5.40px;top:636.03px;font-family:'Liberation Mono',monospace;font-size:8.27px;font-weight:normal;-webkit-text-stroke:0.15px;"><span style="color:#3c9c48">where</span><span style="color:#3a3a46">   dept.dept_name = employee.dept_name</span></div>
<div class="t" style="left:5.40px;top:645.96px;font-family:'Liberation Mono',monospace;font-size:8.27px;font-weight:normal;-webkit-text-stroke:0.15px;"><span style="color:#3c3ca8">and</span><span style="color:#3a3a46">     dept_nbr       = </span><span style="color:#d8883a">&#x27;A4711&#x27;</span></div>
<div class="t" style="left:5.40px;top:655.89px;font-family:'Liberation Mono',monospace;font-size:8.27px;font-weight:normal;-webkit-text-stroke:0.15px;"><span style="color:#3c3ca8">and</span><span style="color:#3a3a46">     dept_name      = </span><span style="color:#d8883a">&#x27;Consultants&#x27;</span></div>
<div class="t" style="left:5.40px;top:665.82px;font-family:'Liberation Mono',monospace;font-size:8.27px;font-weight:normal;-webkit-text-stroke:0.15px;"><span style="color:#3c9c48">order by</span><span style="color:#3a3a46"> dept_nbr    , employee_nbr</span></div>
<div class="t" style="left:5.40px;top:675.75px;font-family:'Liberation Mono',monospace;font-size:8.27px;font-weight:normal;-webkit-text-stroke:0.15px;"><span style="color:#3c9c48">group by</span><span style="color:#3a3a46"> account_nbr , customer_id</span><span style="color:#3c3ca8">;</span></div>
<div class="a" style="left:377.4px;top:21.4px;width:14.5px;height:23.3px;border:1.2px solid #7aa0d4"></div>
<svg class="a" style="left:377px;top:21px" width="15" height="24"><path d="M11.5 8.2 L3.6 12.2 L11.5 16.0" fill="none" stroke="#4a78c8" stroke-width="1.1"/></svg>
<div class="a" style="left:396.2px;top:21.4px;width:35.69999999999999px;height:23.3px;border:1.2px solid #a8c4f0"></div>
<div class="a" style="left:436.2px;top:21.4px;width:35.5px;height:23.3px;border:1.2px solid #a8c4f0"></div>
<div class="a" style="left:476.1px;top:21.4px;width:35.599999999999966px;height:23.3px;border:1.2px solid #a8c4f0"></div>
<svg class="a" style="left:396.2px;top:21.4px" width="36" height="24" viewBox="0 0 36 24"><circle cx="5.8" cy="18.0" r="2.3" fill="#f5c518"/><circle cx="7.8" cy="12.1" r="2.3" fill="#f5c518"/><circle cx="12.5" cy="7.8" r="2.3" fill="#8ed62a"/><circle cx="18.7" cy="6.3" r="2.3" fill="#2aa88e"/><circle cx="25.2" cy="7.8" r="2.3" fill="#2a8ee0"/><circle cx="29.9" cy="12.1" r="2.3" fill="#0a4aa0"/><circle cx="31.6" cy="18.0" r="2.3" fill="#6a3aa8"/>
<text x="19.0" y="19.8" font-family="Liberation Sans" font-weight="bold" font-size="9.6" fill="#3a3a3a" text-anchor="middle" textLength="19.5" lengthAdjust="spacingAndGlyphs">SQL</text></svg>
<svg class="a" style="left:436.2px;top:21.9px" width="36" height="24" viewBox="0 0 36 24"><circle cx="5.8" cy="18.0" r="2.3" fill="#f5c518"/><circle cx="7.8" cy="12.1" r="2.3" fill="#f5c518"/><circle cx="12.5" cy="7.8" r="2.3" fill="#8ed62a"/><circle cx="18.7" cy="6.3" r="2.3" fill="#2aa88e"/><circle cx="25.2" cy="7.8" r="2.3" fill="#2a8ee0"/><circle cx="29.9" cy="12.1" r="2.3" fill="#0a4aa0"/><circle cx="31.6" cy="18.0" r="2.3" fill="#6a3aa8"/>
<rect x="13.6" y="10.3" width="10.6" height="10.4" rx="2" fill="#d8d8d8" stroke="#3c3c3c" stroke-width="1.8"/>
<rect x="16.2" y="12.6" width="5.4" height="1.1" fill="#444"/><rect x="16.2" y="14.6" width="5.4" height="1.1" fill="#444"/><rect x="16.2" y="16.6" width="5.4" height="1.1" fill="#444"/><rect x="16.2" y="18.4" width="5.4" height="1.0" fill="#555"/>
</svg>
<svg class="a" style="left:476.1px;top:21.4px" width="36" height="24" viewBox="0 0 36 24">
<path d="M11.8 5.0 L15.0 10.6" stroke="#f2c640" stroke-width="3" stroke-linecap="round"/>
<path d="M13.2 12.4 L18.2 9.9" stroke="#2ab49c" stroke-width="2.3"/>
<path d="M13.8 13.4 L18.6 11.0 L25.8 18.9 Q22 21.8 18.2 22.8 Q15.0 18.2 13.8 13.4Z" fill="#f0c850"/>
<path d="M20.3 15.6 L21.6 18.6" stroke="#ffd000" stroke-width="1.2" stroke-linecap="round"/>
</svg>
<div class="a" style="left:696.2px;top:21.4px;width:36.19999999999993px;height:23.3px;border:1.2px solid #a8c4f0"></div>
<div class="a" style="left:736.8px;top:21.4px;width:35.700000000000045px;height:23.3px;border:1.2px solid #a8c4f0"></div>
<svg class="a" style="left:696.2px;top:21.4px" width="36" height="24" viewBox="0 0 36 24">
<rect x="4.9" y="5.2" width="14.4" height="14.6" rx="2.8" fill="#f0f0f2" stroke="#262626" stroke-width="1.7"/>
<rect x="7.8" y="7.6" width="8.6" height="1.6" fill="#3c3c48"/><rect x="7.8" y="10.5" width="8.6" height="1.6" fill="#3c3c48"/><rect x="7.8" y="13.2" width="8.6" height="1.6" fill="#3c3c48"/><rect x="7.8" y="16.0" width="8.6" height="1.6" fill="#3c3c48"/>
<clipPath id="c1"><rect x="0" y="0" width="36" height="24"/></clipPath>
<g clip-path="url(#c1)"><circle cx="28.3" cy="12.4" r="8" fill="#000"/>
<path d="M36 12.4 L24.0 12.4 M28.0 8.0 L23.6 12.4 L28.0 16.8" fill="none" stroke="#f4f4f4" stroke-width="2"/></g>
</svg>
<svg class="a" style="left:736.8px;top:21.4px" width="36" height="24" viewBox="0 0 36 24">
<circle cx="11.9" cy="12.6" r="7.9" fill="#000"/>
<path d="M6.6 12.6 L16.4 12.6 M12.4 8.2 L16.8 12.6 L12.4 17.0" fill="none" stroke="#f4f4f4" stroke-width="2"/>
<clipPath id="c2"><rect x="0" y="0" width="35.2" height="24"/></clipPath>
<g clip-path="url(#c2)"><rect x="21.8" y="5.2" width="14.5" height="14.6" rx="2.8" fill="#f4f8f0" stroke="#22a890" stroke-width="1.9"/>
<rect x="24.2" y="7.6" width="11.5" height="1.9" fill="#a070b8"/><rect x="24.2" y="10.4" width="11.5" height="1.9" fill="#3a8ae0"/><rect x="24.2" y="13.1" width="11.5" height="1.9" fill="#98e838"/><rect x="24.2" y="15.9" width="11.5" height="2.0" fill="#f8c458"/></g>
</svg>
</body></html>
